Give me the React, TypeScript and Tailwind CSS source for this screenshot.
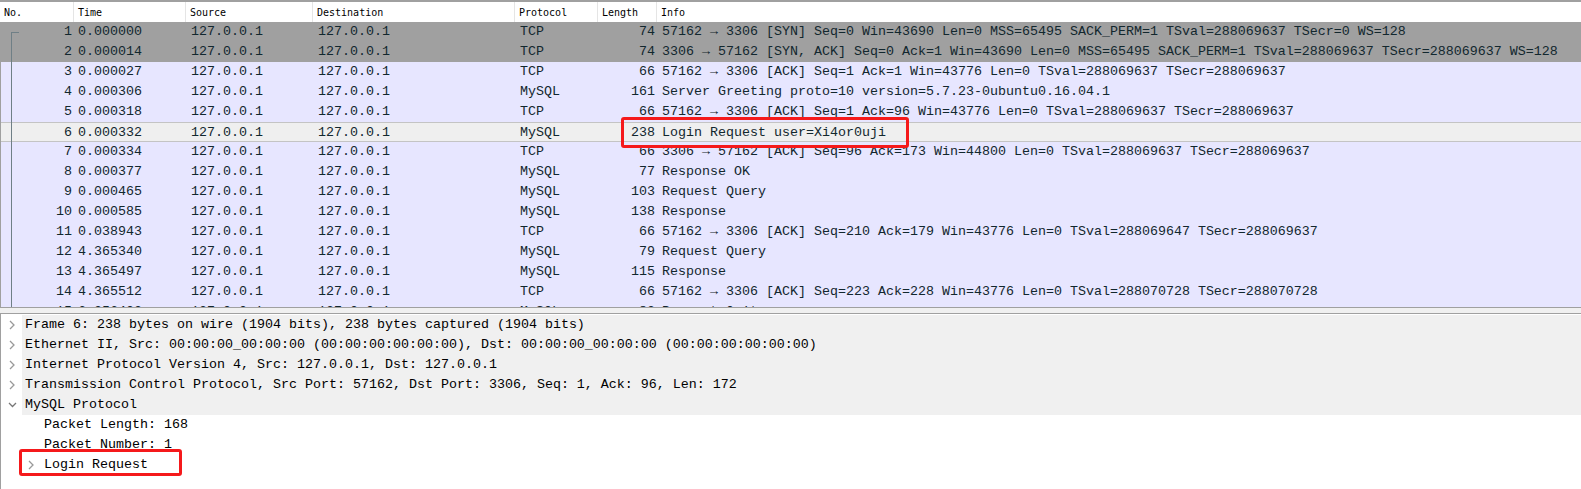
import React from "react";

type Packet = [number, string, string, number, string];

const packets: Packet[] = [
  [1, "0.000000", "TCP", 74, "57162 → 3306 [SYN] Seq=0 Win=43690 Len=0 MSS=65495 SACK_PERM=1 TSval=288069637 TSecr=0 WS=128"],
  [2, "0.000014", "TCP", 74, "3306 → 57162 [SYN, ACK] Seq=0 Ack=1 Win=43690 Len=0 MSS=65495 SACK_PERM=1 TSval=288069637 TSecr=288069637 WS=128"],
  [3, "0.000027", "TCP", 66, "57162 → 3306 [ACK] Seq=1 Ack=1 Win=43776 Len=0 TSval=288069637 TSecr=288069637"],
  [4, "0.000306", "MySQL", 161, "Server Greeting proto=10 version=5.7.23-0ubuntu0.16.04.1"],
  [5, "0.000318", "TCP", 66, "57162 → 3306 [ACK] Seq=1 Ack=96 Win=43776 Len=0 TSval=288069637 TSecr=288069637"],
  [6, "0.000332", "MySQL", 238, "Login Request user=Xi4or0uji"],
  [7, "0.000334", "TCP", 66, "3306 → 57162 [ACK] Seq=96 Ack=173 Win=44800 Len=0 TSval=288069637 TSecr=288069637"],
  [8, "0.000377", "MySQL", 77, "Response OK"],
  [9, "0.000465", "MySQL", 103, "Request Query"],
  [10, "0.000585", "MySQL", 138, "Response"],
  [11, "0.038943", "TCP", 66, "57162 → 3306 [ACK] Seq=210 Ack=179 Win=43776 Len=0 TSval=288069647 TSecr=288069637"],
  [12, "4.365340", "MySQL", 79, "Request Query"],
  [13, "4.365497", "MySQL", 115, "Response"],
  [14, "4.365512", "TCP", 66, "57162 → 3306 [ACK] Seq=223 Ack=228 Win=43776 Len=0 TSval=288070728 TSecr=288070728"],
  [15, "6.356403", "MySQL", 83, "Request Quit"],
];

const cols = "grid grid-cols-[74px_112px_127px_202px_83px_59px_1fr]";
const mono = "font-['Liberation_Mono','DejaVu_Sans_Mono',monospace]";

function Chevron({ open }: { open?: boolean }) {
  return open ? (
    <svg width="9" height="6" viewBox="0 0 9 6" className="shrink-0">
      <polyline points="1,1 4.5,4.5 8,1" fill="none" stroke="#777" strokeWidth="1.3" />
    </svg>
  ) : (
    <svg width="6" height="10" viewBox="0 0 6 10" className="shrink-0">
      <polyline points="1,1 5,5 1,9" fill="none" stroke="#999" strokeWidth="1.3" />
    </svg>
  );
}

function DetailRow({
  text,
  indent,
  arrow,
  open,
  shaded,
}: {
  text: string;
  indent: number;
  arrow?: boolean;
  open?: boolean;
  shaded?: boolean;
}) {
  return (
    <div className="flex h-5 items-center">
      <div className={indent === 0 ? "w-[21px] flex justify-center pl-[1px]" : "w-[28px]"} />
      {indent === 0 ? null : null}
      <div className={`flex flex-1 h-full items-center ${shaded ? "bg-[#f0f0f0]" : ""}`}>
        {indent > 0 && <div className="w-[1px]" />}
        <span className="whitespace-pre text-black">{text}</span>
      </div>
    </div>
  );
}

export default function App() {
  const header = ["No.", "Time", "Source", "Destination", "Protocol", "Length", "Info"];
  const top = [
    "Frame 6: 238 bytes on wire (1904 bits), 238 bytes captured (1904 bits)",
    "Ethernet II, Src: 00:00:00_00:00:00 (00:00:00:00:00:00), Dst: 00:00:00_00:00:00 (00:00:00:00:00:00)",
    "Internet Protocol Version 4, Src: 127.0.0.1, Dst: 127.0.0.1",
    "Transmission Control Protocol, Src Port: 57162, Dst Port: 3306, Seq: 1, Ack: 96, Len: 172",
  ];

  return (
    <div className={`relative w-[1581px] h-[489px] overflow-hidden bg-white ${mono} text-[13.33px]`}>
      {/* Packet list */}
      <div className="flex flex-col h-[308px] border-t-2 border-b border-[#a0a0a0]">
        <div className={`${cols} h-5 shrink-0 bg-white text-[10px] text-black font-['DejaVu_Sans_Mono',monospace]`}>
          {header.map((h, i) => (
            <div
              key={h}
              className={`flex items-center pl-[4px] ${i < 6 ? "border-r border-[#e5e5e5]" : ""}`}
            >
              {h}
            </div>
          ))}
        </div>
        <div className="relative flex-1 overflow-hidden border-l border-[#a0a0a0]">
          {packets.map(([no, time, proto, len, info]) => {
            const syn = no <= 2;
            const sel = no === 6;
            const bg = syn
              ? "bg-[#a0a0a0]"
              : sel
              ? "bg-[#efefef] border-y border-[#c4c4c4]"
              : "bg-[#e7e6ff]";
            return (
              <div key={no} className={`${cols} h-5 items-center text-[#12272e] whitespace-pre ${bg}`}>
                <div className="text-right pr-[3px]">{no}</div>
                <div className="pl-[3px]">{time}</div>
                <div className="pl-[4px]">127.0.0.1</div>
                <div className="pl-[4px]">127.0.0.1</div>
                <div className="pl-[4px]">{proto}</div>
                <div className="text-right pr-[3px]">{len}</div>
                <div className="pl-[4px]">{info}</div>
              </div>
            );
          })}
          {/* related packets indicator */}
          <div className="absolute left-[10px] top-[10px] w-[8px] h-[1px] bg-[#6f7f86]" />
          <div className="absolute left-[10px] top-[10px] bottom-0 w-[1px] bg-[#6f7f86]" />
        </div>
      </div>

      {/* splitter */}
      <div className="h-[5px] bg-[#f0f0f0]" />

      {/* Packet details */}
      <div className="flex flex-col h-[176px] border-t border-l border-[#a0a0a0] pt-[1px] text-black">
        {top.map((t) => (
          <div key={t} className="flex h-5 items-center">
            <div className="w-[21px] flex justify-center pl-[1px]">
              <Chevron />
            </div>
            <div className="flex-1 h-full flex items-center bg-[#f0f0f0] pl-[3px] whitespace-pre">{t}</div>
          </div>
        ))}
        <div className="flex h-5 items-center">
          <div className="w-[21px] flex justify-center pl-[1px]">
            <Chevron open />
          </div>
          <div className="flex-1 h-full flex items-center bg-[#f0f0f0] pl-[3px] whitespace-pre">MySQL Protocol</div>
        </div>
        <div className="flex h-5 items-center pl-[43px] whitespace-pre">Packet Length: 168</div>
        <div className="flex h-5 items-center pl-[43px] whitespace-pre">Packet Number: 1</div>
        <div className="flex h-5 items-center">
          <div className="w-[43px] flex justify-end pr-[10px]">
            <Chevron />
          </div>
          <span className="whitespace-pre">Login Request</span>
        </div>
      </div>

      {/* annotation boxes */}
      <div className="absolute left-[621px] top-[117px] w-[288px] h-[31px] border-[3px] border-[#f5191b] rounded-[3px]" />
      <div className="absolute left-[19px] top-[449px] w-[163px] h-[27px] border-[3px] border-[#f5191b] rounded-[3px]" />
    </div>
  );
}
